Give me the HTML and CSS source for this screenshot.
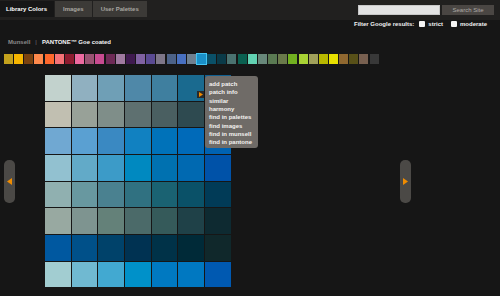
FILE: index.html
```html
<!DOCTYPE html>
<html lang="en">
<head>
  <meta charset="UTF-8">
  <title>Library Colors</title>
  <link rel="stylesheet" href="styles.css">
</head>
<body>
  <div class="topbar">
    <div class="tabs">
      <a class="tab active">Library Colors</a>
      <a class="tab">Images</a>
      <a class="tab">User Palettes</a>
    </div>
    <form class="search">
      <input type="text" class="search-box">
      <button type="button" class="search-btn">Search Site</button>
    </form>
  </div>

  <div class="filter">
    <span>Filter Google results:</span>
    <input type="checkbox" class="check">
    <span>strict</span>
    <input type="checkbox" class="check gap">
    <span>moderate</span>
  </div>

  <div class="books">
    <span class="book">Munsell</span>
    <span class="sep">|</span>
    <span class="book current">PANTONE™ Goe coated</span>
  </div>

  <div class="hues" id="hues"></div>

  <div class="stage">
    <div class="pager"><svg width="5" height="7" viewBox="0 0 5 7"><path d="M5 0 L0 3.5 L5 7 Z" fill="#f08c00"/></svg></div>
    <div class="patches" id="patches">
      <div class="patch-btn"><svg width="4" height="5" viewBox="0 0 4 5"><path d="M0 0 L4 2.5 L0 5 Z" fill="#f08c00"/></svg></div>
      <ul class="menu">
        <li>add patch</li>
        <li>patch info</li>
        <li>similar</li>
        <li>harmony</li>
        <li>find in palettes</li>
        <li>find images</li>
        <li>find in munsell</li>
        <li>find in pantone</li>
      </ul>
    </div>
    <div class="pager next"><svg width="5" height="7" viewBox="0 0 5 7"><path d="M0 0 L5 3.5 L0 7 Z" fill="#f08c00"/></svg></div>
  </div>

  <script>
    const hues = ['#c4a21d', '#f7b600', '#7a4210', '#ff8a4c', '#ff682c', '#f57277', '#8d1b2f',
      '#ee6aa0', '#9a5272', '#c84b90', '#6e2a56', '#a07aa0', '#3f1a4f', '#8062a2', '#5a4a92',
      '#7e7688', '#4c6288', '#4870c0', '#6f8090', '#1a90c8', '#0a5068', '#0a3a48', '#4a7270',
      '#0a6050', '#62d2b2', '#68887a', '#5a7a52', '#6a7a4a', '#72b020', '#a8d234', '#a0a05a',
      '#b8b800', '#e8e000', '#906830', '#585018', '#786050', '#383838'];
    const selected = 19;

    const patches = [
      ['#c2d2cd', '#90b0c0', '#6f9fb6', '#4f88a8', '#3f7f9f', '#1a6a8f', '#105f90'],
      ['#c1bfb1', '#98a198', '#7f8e89', '#5e7070', '#4a5f61', '#2e4a50', '#243f48'],
      ['#70a8d2', '#5aa0d2', '#3a89c2', '#1181c1', '#0072b9', '#006ab9', '#0062b1'],
      ['#92c1d0', '#62aac8', '#3c9bc8', '#0089c0', '#0071b0', '#0069b1', '#0052a8'],
      ['#90b0b0', '#6898a0', '#4a8190', '#307181', '#1a6272', '#0a5168', '#013b57'],
      ['#98a9a1', '#7e9490', '#648179', '#4b6a69', '#355a5a', '#1f4148', '#0e2a31'],
      ['#0058a0', '#005089', '#00426a', '#003252', '#003248', '#002a38', '#10282b'],
      ['#a2cdd1', '#70b9d1', '#42a9d1', '#0091c9', '#0079c1', '#0078c1', '#0059b1']
    ];

    const huesEl = document.getElementById('hues');
    hues.forEach((color, i) => {
      const sw = document.createElement('span');
      sw.className = i === selected ? 'hue selected' : 'hue';
      sw.style.background = color;
      huesEl.appendChild(sw);
    });

    const patchesEl = document.getElementById('patches');
    const firstOverlay = patchesEl.firstElementChild;
    patches.forEach(row => {
      row.forEach(color => {
        const cell = document.createElement('div');
        cell.className = 'patch';
        cell.style.background = color;
        patchesEl.insertBefore(cell, firstOverlay);
      });
    });
  </script>
</body>
</html>
```

FILE: styles.css
```css
body {
  margin: 0;
  background-color: #161616;
  font-family: "Liberation Sans", Arial, sans-serif;
  font-size: 6px;
  font-weight: bold;
  color: #f2f2f2;
}

.topbar {
  display: flex;
  justify-content: space-between;
  height: 20px;
  background-color: #21201f;
}

.tabs {
  display: flex;
  gap: 1px;
  padding-top: 1px;
}

.tab {
  display: flex;
  align-items: center;
  height: 16px;
  padding: 0 8px;
  background-color: #3c3a37;
  color: #a9a6a1;
}

.tab.active {
  padding: 0 7px 0 6px;
  background-color: #161616;
  color: #ffffff;
}

.search {
  display: flex;
  gap: 2px;
  margin: 5px 6px 0 0;
}

.search-box {
  width: 82px;
  height: 10px;
  box-sizing: border-box;
  border: 1px solid #c8c8c8;
  background-color: #e3e3e3;
  padding: 0;
}

.search-btn {
  width: 52px;
  height: 10px;
  padding: 0;
  border: none;
  background-color: #4a4643;
  color: #aeaaa6;
  font-family: inherit;
  font-size: 6px;
  font-weight: normal;
}

.filter {
  display: flex;
  justify-content: flex-end;
  align-items: center;
  height: 8px;
  padding-right: 13px;
  line-height: 8px;
}

.check {
  appearance: none;
  width: 6px;
  height: 6px;
  margin: 0 3px 0 5px;
  border-radius: 1px;
  background-color: #f4f4f4;
}

.check.gap {
  margin-left: 8px;
}

.books {
  display: flex;
  gap: 5px;
  margin: 10px 0 0 8px;
  line-height: 8px;
}

.book {
  color: #8a8a8a;
}

.book.current {
  color: #f4f4f4;
}

.sep {
  color: #777;
  font-weight: normal;
}

.hues {
  display: flex;
  gap: 1.17px;
  margin: 8px 0 0 4px;
}

.hue {
  width: 9px;
  height: 10px;
}

.hue.selected {
  box-shadow: 0 0 0 1px #44c4f2;
}

.stage {
  display: flex;
  align-items: center;
  margin-top: 11px;
  padding-left: 4px;
}

.pager {
  display: flex;
  align-items: center;
  justify-content: center;
  width: 11px;
  height: 43px;
  border-radius: 5px;
  background-color: #4b4946;
}

.pager svg {
  margin-left: -1px;
}

.pager.next {
  margin-left: 169px;
}

.pager.next svg {
  margin-left: 1px;
}

.patches {
  position: relative;
  display: grid;
  grid-template-columns: repeat(7, 25.67px);
  grid-auto-rows: 25.67px;
  gap: 1px;
  margin-left: 30px;
}

.patch-btn {
  position: absolute;
  left: 152px;
  top: 16px;
  width: 7px;
  height: 7px;
  display: flex;
  align-items: center;
  justify-content: center;
  background-color: #2a2a2a;
}

.menu {
  position: absolute;
  left: 160px;
  top: 1px;
  width: 53px;
  height: 72px;
  box-sizing: border-box;
  margin: 0;
  padding: 4px 0 0 4px;
  list-style: none;
  border-radius: 3px;
  background-color: #6f6b67;
  color: #f4f2f0;
  line-height: 8.33px;
}
```
